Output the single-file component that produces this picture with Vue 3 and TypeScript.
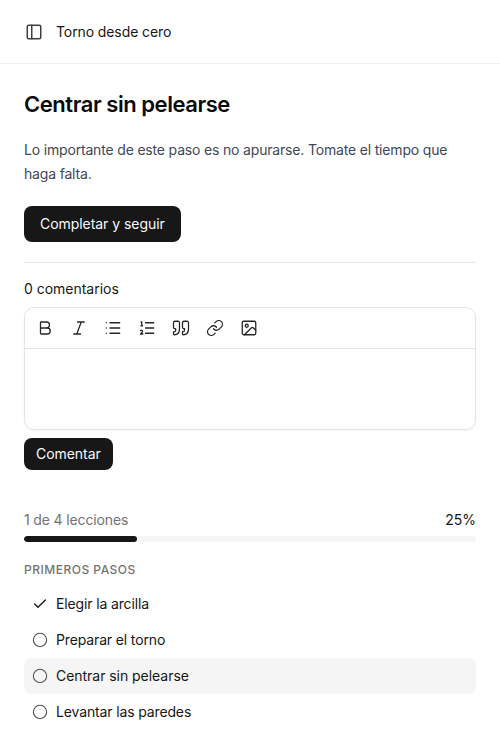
<script setup lang="ts">
const lessons = [
  { title: 'Elegir la arcilla', done: true, active: false },
  { title: 'Preparar el torno', done: false, active: false },
  { title: 'Centrar sin pelearse', done: false, active: true },
  { title: 'Levantar las paredes', done: false, active: false },
]
</script>

<template>
  <div class="page">
    <header class="topbar">
      <svg class="ico big panel" viewBox="0 0 24 24"><rect x="3" y="3" width="18" height="18" rx="2" /><path d="M9 3v18" /></svg>
      <span class="course">Torno desde cero</span>
    </header>
    <main class="content">
      <h1>Centrar sin pelearse</h1>
      <p class="body">Lo importante de este paso es no apurarse. Tomate el tiempo que haga falta.</p>
      <button class="btn primary">Completar y seguir</button>
      <hr class="rule" />
      <div class="count">0 comentarios</div>
      <section class="editor">
        <div class="toolbar">
          <span class="tool"><svg class="ico big" viewBox="0 0 24 24"><path d="M6 12h9a4 4 0 0 1 0 8H7a1 1 0 0 1-1-1V5a1 1 0 0 1 1-1h7a4 4 0 0 1 0 8" /></svg></span>
          <span class="tool"><svg class="ico big" viewBox="0 0 24 24"><path d="M19 4h-9M14 20H5M15 4 9 20" /></svg></span>
          <span class="tool"><svg class="ico big" viewBox="0 0 24 24"><path d="M3 5h.01M3 12h.01M3 19h.01M8 5h13M8 12h13M8 19h13" /></svg></span>
          <span class="tool"><svg class="ico big" viewBox="0 0 24 24"><path d="M10 5h11M10 12h11M10 19h11M4 4h1v5M4 9h2M6.500 20H3.400c0-1 2.600-1.900 2.600-3.500a1.500 1.500 0 0 0-2.600-1" /></svg></span>
          <span class="tool"><svg class="ico big" viewBox="0 0 24 24"><path d="M3 21c3 0 7-1 7-8V5c0-1.250-.756-2.017-2-2H4c-1.250 0-2 .75-2 1.972V11c0 1.250.75 2 2 2 1 0 1 0 1 1v1c0 1-1 2-2 2s-1 .008-1 1.031V20c0 1 0 1 1 1z" /><path d="M15 21c3 0 7-1 7-8V5c0-1.250-.757-2.017-2-2h-4c-1.250 0-2 .75-2 1.972V11c0 1.250.75 2 2 2h.75c0 2.250.25 4-2.750 4v3c0 1 0 1 1 1z" /></svg></span>
          <span class="tool"><svg class="ico big" viewBox="0 0 24 24"><path d="M10 13a5 5 0 0 0 7.540.540l3-3a5 5 0 0 0-7.070-7.070l-1.720 1.710" /><path d="M14 11a5 5 0 0 0-7.540-.540l-3 3a5 5 0 0 0 7.070 7.070l1.710-1.710" /></svg></span>
          <span class="tool"><svg class="ico big" viewBox="0 0 24 24"><rect x="3" y="3" width="18" height="18" rx="2" /><circle cx="9" cy="9" r="2" /><path d="m21 15-3.086-3.086a2 2 0 0 0-2.828 0L6 21" /></svg></span>
        </div>
        <div class="area"></div>
      </section>
      <button class="btn small">Comentar</button>
      <div class="progress-head">
        <span class="muted">1 de 4 lecciones</span>
        <span class="pct">25%</span>
      </div>
      <div class="track"><div class="fill" :style="{ width: '25%' }"></div></div>
      <div class="group">PRIMEROS PASOS</div>
      <ul class="list">
        <li v-for="l in lessons" :key="l.title" class="row" :class="{ active: l.active }">
          <svg v-if="l.done" class="ico status" viewBox="0 0 24 24"><path d="M20 6 9 17l-5-5" /></svg>
          <svg v-else class="ico status ring" viewBox="0 0 24 24"><circle cx="12" cy="12" r="10" /></svg>
          <span>{{ l.title }}</span>
        </li>
      </ul>
    </main>
  </div>
</template>

<style>
html, body { background: #fff; }
</style>

<style scoped>
.page {
  width: 500px;
  font-family: Inter, sans-serif;
  color: #171717;
  font-size: 14px;
  line-height: 20px;
  letter-spacing: -0.14px;
}
.topbar {
  height: 64px;
  box-sizing: border-box;
  border-bottom: 1px solid #f0f0f0;
  display: flex;
  align-items: center;
  gap: 13px;
  padding: 0 25px;
}
.course { font-weight: 400; letter-spacing: -0.1px; }
.ico {
  width: 16px;
  height: 16px;
  fill: none;
  stroke: #171717;
  stroke-width: 2;
  stroke-linecap: round;
  stroke-linejoin: round;
  display: block;
}
.ico.big { width: 18px; height: 18px; stroke-width: 1.7; stroke: #262626; }
.ico.panel { stroke: #404040; stroke-width: 2; }
.content { padding: 24px 24px 0; }
h1 {
  margin: 0;
  font-size: 22px;
  line-height: 32px;
  font-weight: 600;
  letter-spacing: -0.45px;
  color: #0a0a0a;
}
.body {
  margin: 18px 0 0;
  line-height: 24px;
  color: #3f4858;
  letter-spacing: -0.175px;
}
.btn {
  display: block;
  border: 0;
  background: #171717;
  color: #fafafa;
  font: 400 14px/20px Inter, sans-serif;
  letter-spacing: -0.05px;
  border-radius: 8px;
}
.primary { height: 36px; padding: 0 16px; margin-top: 20px; }
.small { height: 32px; padding: 0 12px; margin-top: 8px; }
.rule { border: 0; border-top: 1px solid #e5e5e5; margin: 20px 0 0; }
.count { margin-top: 16px; font-weight: 400; letter-spacing: -0.02px; }
.editor {
  margin-top: 8px;
  border: 1px solid #e5e5e5;
  border-radius: 10px;
  box-shadow: 0 1px 2px rgba(0, 0, 0, 0.05);
}
.toolbar {
  height: 40px;
  border-bottom: 1px solid #e5e5e5;
  display: flex;
  align-items: center;
  padding: 0 3px;
}
.tool { width: 34px; height: 32px; display: flex; align-items: center; justify-content: center; }
.area { height: 80px; }
.progress-head {
  margin-top: 40px;
  display: flex;
  justify-content: space-between;
  align-items: center;
}
.muted { color: #737373; }
.pct { font-weight: 400; letter-spacing: 0; }
.track { height: 6px; margin-top: 6px; background: #f5f5f5; border-radius: 999px; overflow: hidden; }
.fill { height: 100%; background: #171717; border-radius: 999px; }
.group {
  margin-top: 18px;
  font-size: 12px;
  line-height: 20px;
  font-weight: 500;
  color: #737373;
  letter-spacing: 0.5px;
}
.list { list-style: none; margin: 6px 0 0; padding: 0; }
.row {
  height: 36px;
  display: flex;
  align-items: center;
  gap: 8px;
  padding: 0 8px;
  border-radius: 8px;
}
.row.active { background: #f5f5f5; letter-spacing: -0.04px; }
.status { flex: none; }
.ring { stroke: #525252; stroke-width: 1.6; }
</style>
